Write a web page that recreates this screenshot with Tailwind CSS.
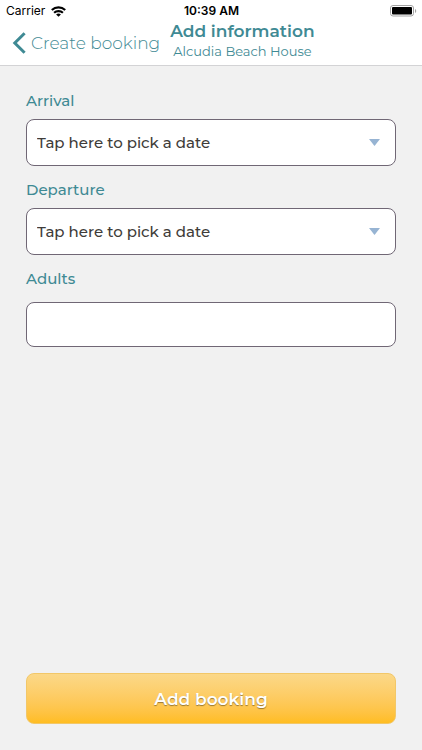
<!DOCTYPE html>
<html lang="en">
<head>
<meta charset="utf-8">
<meta name="viewport" content="width=device-width, initial-scale=1">
<title>Add information</title>
<script src="https://cdn.jsdelivr.net/npm/@tailwindcss/browser@4"></script>
</head>
<body class="flex min-h-screen flex-col bg-[#f1f1f1] font-['Montserrat','Inter',sans-serif] text-[#3f8a94]">
<header class="border-b border-[#d3d3d5] bg-white">
  <div class="grid h-[21px] grid-cols-[1fr_auto_1fr] items-center pt-px pr-[5px] pl-[6px] font-['Inter',sans-serif] text-[12px] leading-5 text-black">
    <div class="flex items-center gap-[6px]">
      <span>Carrier</span>
      <svg class="h-[11px] w-[15px]" viewBox="0 0 15 11" fill="none" stroke="#000" stroke-width="2.2" aria-label="Wi-Fi">
        <path d="M.8 4C4.700.4 10.300.4 14.200 4"/>
        <path d="M3.100 6.700C5.500 4.500 9.500 4.500 11.900 6.700"/>
        <path d="M7.500 10.800 5.100 8.400C6.500 7.200 8.500 7.200 9.900 8.400Z" fill="#000" stroke="none"/>
      </svg>
    </div>
    <span class="font-semibold">10:39 AM</span>
    <svg class="h-3 w-[27px] justify-self-end" viewBox="0 0 27 12" aria-label="Battery full">
      <rect x=".5" y=".5" width="23" height="10.500" rx="2.500" fill="#fff" stroke="#a3a3a3"/>
      <rect x="2" y="2" width="20" height="7.500" rx="1" fill="#000"/>
      <path d="M25 4v4c1.700-.6 1.700-3.400 0-4Z" fill="#a3a3a3"/>
    </svg>
  </div>
  <nav class="flex h-11 items-start pl-3">
    <a href="#" class="flex items-center gap-[5px] pt-[10px] text-[17px] leading-6 font-light">
      <svg class="h-[22px] w-[14px]" viewBox="0 0 14 22" fill="none" stroke="#3f8a94" stroke-width="3" aria-hidden="true"><path d="M12.600 1.200 2.800 11l9.800 9.800"/></svg>
      <span>Create booking</span>
    </a>
    <div class="ml-[10px] text-center">
      <h1 class="text-[17px] leading-5 font-semibold">Add information</h1>
      <p class="text-[13px] leading-5">Alcudia Beach House</p>
    </div>
  </nav>
</header>
<form class="flex flex-1 flex-col px-[26px] pt-[23px] pb-[26px] text-[15px] leading-6 font-medium">
  <label for="arrival">Arrival</label>
  <div class="relative mt-[6px]">
    <select id="arrival" class="h-[47px] w-full appearance-none rounded-lg border border-[#706775] bg-white px-[10px] text-[#403c39]"><option>Tap here to pick a date</option></select>
    <svg class="pointer-events-none absolute top-5 right-4 h-[7px] w-[11px]" viewBox="0 0 11 7" aria-hidden="true"><path d="M0 0h11L5.500 7Z" fill="#97b4d3"/></svg>
  </div>
  <label for="departure" class="mt-3">Departure</label>
  <div class="relative mt-[6px]">
    <select id="departure" class="h-[47px] w-full appearance-none rounded-lg border border-[#706775] bg-white px-[10px] text-[#403c39]"><option>Tap here to pick a date</option></select>
    <svg class="pointer-events-none absolute top-5 right-4 h-[7px] w-[11px]" viewBox="0 0 11 7" aria-hidden="true"><path d="M0 0h11L5.500 7Z" fill="#97b4d3"/></svg>
  </div>
  <label for="adults" class="mt-3">Adults</label>
  <input id="adults" type="text" inputmode="numeric" class="mt-[11px] h-[45px] w-full rounded-lg border border-[#706775] bg-white px-[10px] text-[#403c39]">
  <button type="submit" class="mt-auto h-[51px] w-full rounded-lg border border-[#f2c768] bg-linear-to-b from-[#fbd888] to-[#ffbd20] text-[17px] font-semibold text-white text-shadow-[0_1px_1px_rgb(0_0_0/0.4)]">Add booking</button>
</form>
</body>
</html>
